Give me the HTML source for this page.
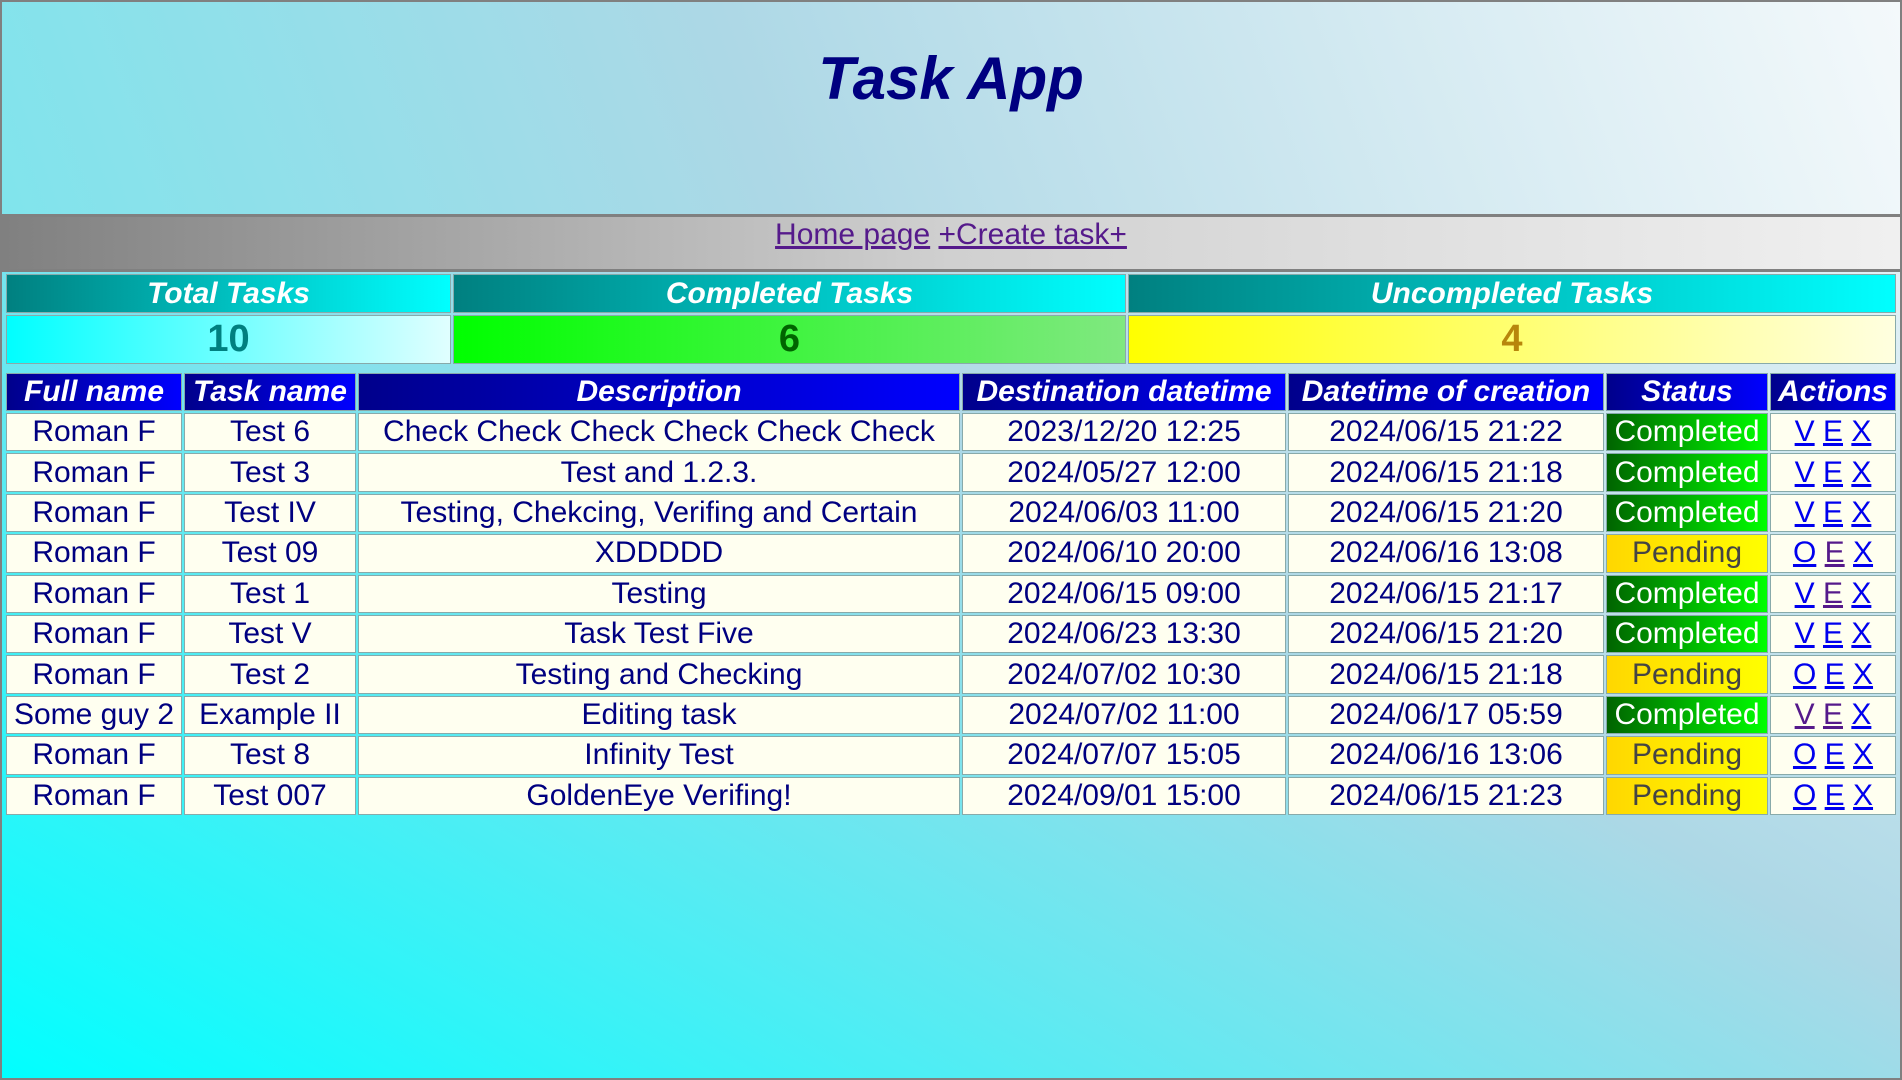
<!DOCTYPE html>
<html><head><meta charset="utf-8"><style>
*{box-sizing:border-box}
html,body{margin:0;padding:0;width:1902px;height:1080px;overflow:hidden}
body{font-family:"Liberation Sans",Arial,sans-serif;background:linear-gradient(to top right,#00ffff 0%,#add8e6 55%,#f8fbfc 100%);border:2px solid #808080;position:relative}
.hdr{height:215px;border-bottom:3px solid #808080;text-align:center;background:linear-gradient(70deg,#80e4ec 0%,#add8e6 40%,#f4f9fb 100%)}
.hdr h1{margin:0;padding-top:41px;font-size:60px;font-style:italic;font-weight:bold;color:#000080;line-height:72px}
.nav{height:55px;border-bottom:3px solid #808080;text-align:center;background:linear-gradient(to right,#808080,#d0d0d0 50%,#f0f0f0);font-size:30px;line-height:34px;padding-top:1px}
.nav a{color:#551a8b}
table{border-collapse:separate;border-spacing:2px;position:absolute;left:2px;table-layout:fixed}
td,th{border:1px solid #8aa;padding:0;text-align:center;white-space:nowrap;overflow:hidden}
.st{top:270px;width:1894px}
.st th{height:39px;font-size:30px;font-style:italic;color:#fff;background:linear-gradient(to right,#008080,#00ffff)}
.st td{height:49px;font-size:38px;font-weight:bold}
.t1{background:linear-gradient(to right,#00ffff,#e0ffff);color:#008080}
.t2{background:linear-gradient(to right,#00ff00,#80e880);color:#006400}
.t3{background:linear-gradient(to right,#ffff00,#ffffe0);color:#b8860b}
.mt{top:369px;width:1894px}
.mt th{height:38px;font-size:30px;font-style:italic;color:#fff;background:linear-gradient(to right,#00008b,#0000ff)}
.mt td{height:38.4px;font-size:30px;color:#000080;background:#fffff0}
.mt td.c{background:linear-gradient(to right,#006400,#00ff00);color:#fff}
.mt td.p{background:linear-gradient(to right,#ffd700,#ffff00);color:#444}
.mt a{color:#0000ee}
.mt a.v{color:#551a8b}
</style></head><body>
<div class="hdr"><h1>Task App</h1></div>
<div class="nav"><a href="#">Home page</a> <a href="#">+Create task+</a></div>
<table class="st"><colgroup><col style="width:445px"><col style="width:673px"><col></colgroup>
<tr><th>Total Tasks</th><th>Completed Tasks</th><th>Uncompleted Tasks</th></tr>
<tr><td class="t1">10</td><td class="t2">6</td><td class="t3">4</td></tr></table>
<table class="mt"><colgroup><col style="width:176px"><col style="width:172px"><col style="width:602px"><col style="width:324px"><col style="width:316px"><col style="width:162px"><col></colgroup>
<tr><th>Full name</th><th>Task name</th><th>Description</th><th>Destination datetime</th><th>Datetime of creation</th><th>Status</th><th>Actions</th></tr>
<tr><td>Roman F</td><td>Test 6</td><td>Check Check Check Check Check Check</td><td>2023/12/20 12:25</td><td>2024/06/15 21:22</td><td class="c">Completed</td><td><a href="#">V</a> <a href="#">E</a> <a href="#">X</a></td></tr>
<tr><td>Roman F</td><td>Test 3</td><td>Test and 1.2.3.</td><td>2024/05/27 12:00</td><td>2024/06/15 21:18</td><td class="c">Completed</td><td><a href="#">V</a> <a href="#">E</a> <a href="#">X</a></td></tr>
<tr><td>Roman F</td><td>Test IV</td><td>Testing, Chekcing, Verifing and Certain</td><td>2024/06/03 11:00</td><td>2024/06/15 21:20</td><td class="c">Completed</td><td><a href="#">V</a> <a href="#">E</a> <a href="#">X</a></td></tr>
<tr><td>Roman F</td><td>Test 09</td><td>XDDDDD</td><td>2024/06/10 20:00</td><td>2024/06/16 13:08</td><td class="p">Pending</td><td><a href="#">O</a> <a class="v" href="#">E</a> <a href="#">X</a></td></tr>
<tr><td>Roman F</td><td>Test 1</td><td>Testing</td><td>2024/06/15 09:00</td><td>2024/06/15 21:17</td><td class="c">Completed</td><td><a href="#">V</a> <a class="v" href="#">E</a> <a href="#">X</a></td></tr>
<tr><td>Roman F</td><td>Test V</td><td>Task Test Five</td><td>2024/06/23 13:30</td><td>2024/06/15 21:20</td><td class="c">Completed</td><td><a href="#">V</a> <a href="#">E</a> <a href="#">X</a></td></tr>
<tr><td>Roman F</td><td>Test 2</td><td>Testing and Checking</td><td>2024/07/02 10:30</td><td>2024/06/15 21:18</td><td class="p">Pending</td><td><a href="#">O</a> <a href="#">E</a> <a href="#">X</a></td></tr>
<tr><td>Some guy 2</td><td>Example II</td><td>Editing task</td><td>2024/07/02 11:00</td><td>2024/06/17 05:59</td><td class="c">Completed</td><td><a class="v" href="#">V</a> <a class="v" href="#">E</a> <a href="#">X</a></td></tr>
<tr><td>Roman F</td><td>Test 8</td><td>Infinity Test</td><td>2024/07/07 15:05</td><td>2024/06/16 13:06</td><td class="p">Pending</td><td><a href="#">O</a> <a href="#">E</a> <a href="#">X</a></td></tr>
<tr><td>Roman F</td><td>Test 007</td><td>GoldenEye Verifing!</td><td>2024/09/01 15:00</td><td>2024/06/15 21:23</td><td class="p">Pending</td><td><a href="#">O</a> <a href="#">E</a> <a href="#">X</a></td></tr>
</table>
</body></html>
